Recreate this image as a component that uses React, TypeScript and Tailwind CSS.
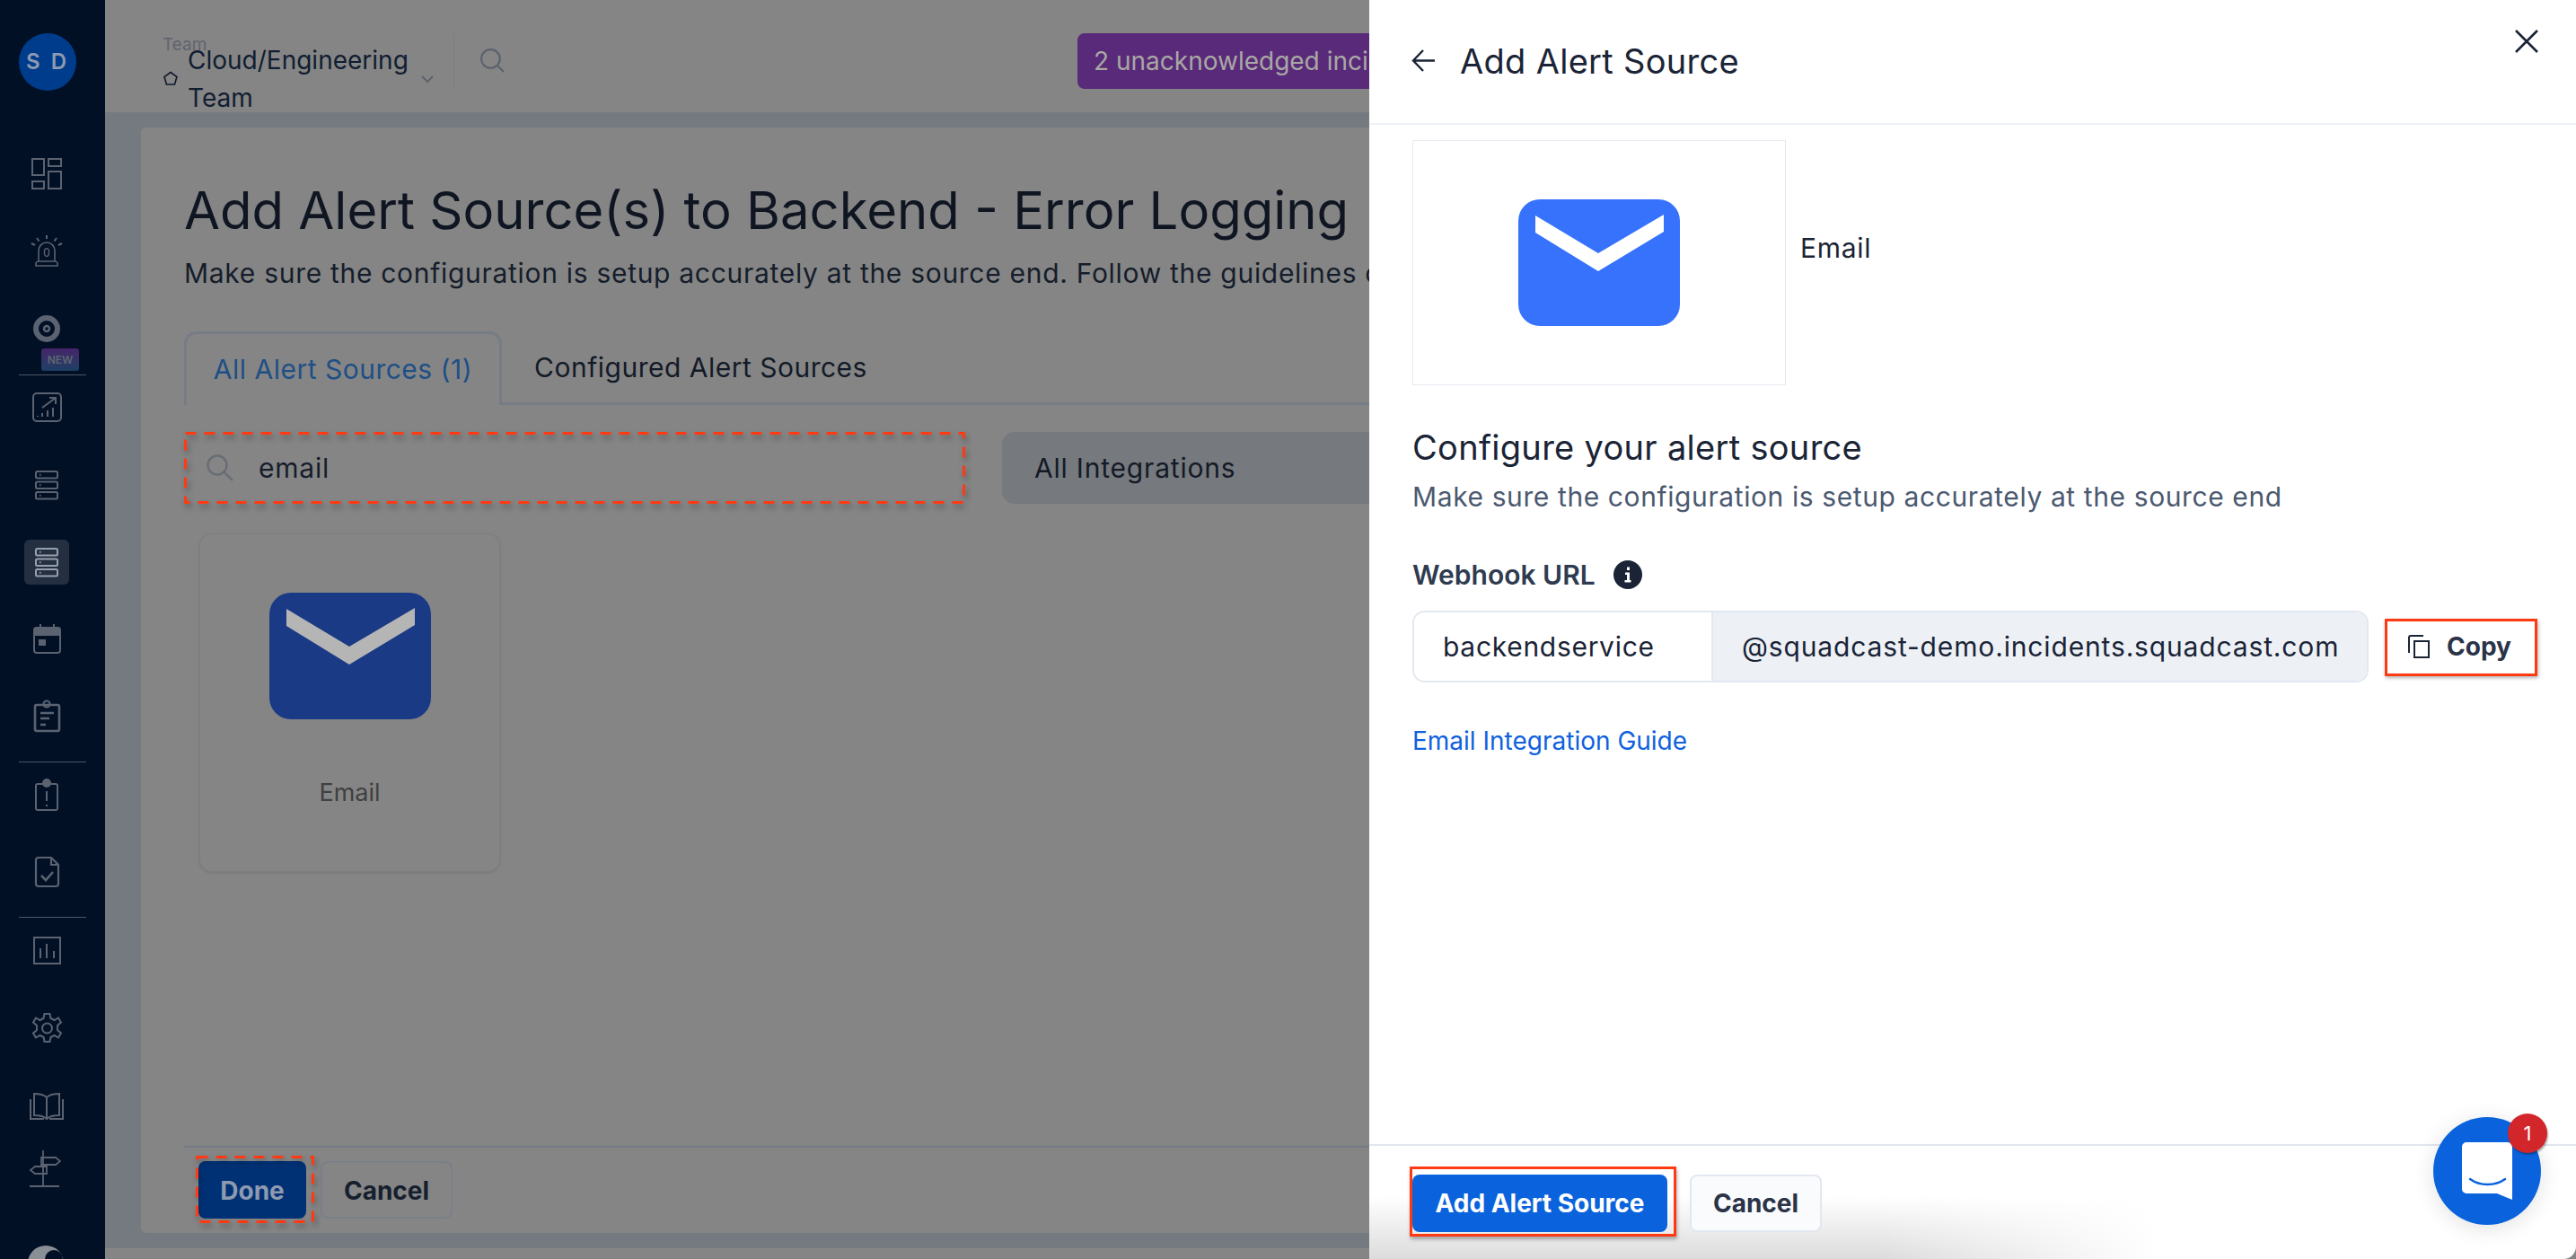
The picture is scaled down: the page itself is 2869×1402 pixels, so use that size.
const iconColor = '#5b6270';

function NavIcon({ children, active }: { children: React.ReactNode; active?: boolean }) {
  return (
    <div className="relative h-[72px] flex items-center justify-center pr-[13px]">
      {active && <div className="absolute left-[27px] top-[11px] w-[50px] h-[50px] rounded-[6px] bg-[#242f41]" />}
      <svg
        viewBox="0 0 40 40"
        fill="none"
        stroke={active ? '#98a0ac' : iconColor}
        strokeWidth="2"
        className="relative w-[40px] h-[40px]"
      >
        {children}
      </svg>
    </div>
  );
}

function NewTag({ className }: { className: string }) {
  return (
    <div className={`absolute left-[46px] w-[42px] h-[25px] rounded-[3px] bg-gradient-to-b from-[#44246a] to-[#183f63] flex items-center justify-center text-[12px] font-semibold text-[#5d6672] ${className}`}>
      NEW
    </div>
  );
}

function ServerRows() {
  return (
    <>
      <rect x="8" y="5" width="24" height="7.5" rx="1.5" />
      <rect x="8" y="16.5" width="24" height="7.5" rx="1.5" />
      <rect x="8" y="28" width="24" height="7.5" rx="1.5" />
      <path d="M12 8.7h1.5M12 20.2h1.5M12 31.7h1.5" />
    </>
  );
}

function EmailIcon({ bg, mark }: { bg: string; mark: string }) {
  return (
    <svg viewBox="0 0 180 141" className="w-[180px] h-[141px]">
      <rect width="180" height="141" rx="24" fill={bg} />
      <path d="M19 18L89 60L162 17V36L89 80L19 37Z" fill={mark} />
    </svg>
  );
}

function Dashed({ className }: { className: string }) {
  return (
    <svg className={`absolute drop-shadow-[2px_4px_3px_rgba(0,0,0,0.35)] ${className}`} fill="none">
      <rect x="1.5" y="1.5" width="calc(100% - 3px)" height="calc(100% - 3px)" stroke="#ff3a12" strokeWidth="3" strokeDasharray="12 9" />
    </svg>
  );
}

function Sidebar() {
  return (
    <aside className="relative w-[117px] shrink-0 bg-[#021026] flex flex-col">
      <div className="ml-[21px] mt-[37px] w-[64px] h-[64px] rounded-full bg-[#003c8c] flex items-center justify-center text-[24px] font-semibold tracking-[3px] text-[#8d9ab0]">
        S D
      </div>

      <div className="mt-[57px] flex flex-col gap-[14px]">
        <NavIcon>
          <rect x="4" y="3" width="13" height="18" />
          <rect x="22" y="3" width="14" height="8" />
          <rect x="22" y="17" width="14" height="19" />
          <rect x="4" y="28" width="13" height="8" />
        </NavIcon>
        <NavIcon>
          <path d="M8 36v-3a3 3 0 0 1 3-2h18a3 3 0 0 1 3 2v3z" strokeWidth="1.6" />
          <path d="M11 31V19a9 9 0 0 1 18 0v12" strokeWidth="1.6" />
          <ellipse cx="20" cy="21" rx="2.6" ry="4.4" strokeWidth="1.4" />
          <path d="M20 2v4M9 5l2.5 3.5M31 5l-2.5 3.5M3 11l4 2M37 11l-4 2" strokeWidth="2" />
        </NavIcon>
        <NavIcon>
          <circle cx="20" cy="20" r="12" stroke={iconColor} strokeWidth="6" />
          <circle cx="20" cy="20" r="3" strokeWidth="2.5" />
        </NavIcon>
      </div>
      <NewTag className="top-[388px]" />

      <div className="mt-[15px] mx-[21px] h-px bg-[#4b5463]" />
      <div className="flex flex-col gap-[14px]">
        <NavIcon>
          <rect x="5" y="4" width="31" height="31" rx="4" />
          <path d="M15 20L30 9M23 9h7v7" />
          <path d="M10 30v-1M15 30v-4M21 30v-7M27 30v-10" />
        </NavIcon>
        <NavIcon>
          <ServerRows />
        </NavIcon>
        <NavIcon active>
          <ServerRows />
        </NavIcon>
        <NavIcon>
          <rect x="6" y="7" width="29" height="28" rx="3" />
          <path d="M6 9a3 3 0 0 1 3-2h23a3 3 0 0 1 3 2v6H6z" fill={iconColor} />
          <path d="M13 3v6M28 3v6" />
          <rect x="11" y="20" width="8" height="7" fill={iconColor} stroke="none" />
        </NavIcon>
        <NavIcon>
          <rect x="7" y="7" width="27" height="29" rx="2" strokeWidth="2.6" />
          <circle cx="20" cy="6" r="3.5" strokeWidth="2.2" />
          <path d="M13 16h15M13 22h10M13 29h6" strokeWidth="2.5" />
        </NavIcon>
      </div>

      <div className="mt-[14px] mx-[21px] h-px bg-[#4b5463]" />
      <div className="mt-px flex flex-col gap-[13px]">
        <NavIcon>
          <rect x="8" y="7" width="24" height="29" rx="2" />
          <circle cx="20" cy="6" r="4" fill={iconColor} />
          <path d="M20 15v11M20 30v2" />
        </NavIcon>
        <NavIcon>
          <path d="M8 7a3 3 0 0 1 3-3h14l8 8v21a3 3 0 0 1-3 3H11a3 3 0 0 1-3-3z" strokeWidth="2.2" />
          <path d="M25 4v8h8" strokeWidth="2.2" />
          <path d="M14 24l5 5 8-9" strokeWidth="2.6" />
        </NavIcon>
      </div>

      <div className="mt-[14px] mx-[21px] h-px bg-[#4b5463]" />
      <div className="mt-px flex flex-col gap-[14px]">
        <NavIcon>
          <rect x="6" y="5" width="29" height="29" />
          <path d="M13 28v-11M20 28V12M28 28v-8" />
        </NavIcon>
        <NavIcon>
          <path d="M17.5 4h6l1 5 4 2 4.500-2.500 3 5-4 3.500v5l4 3.500-3 5-4.500-2.500-4 2-1 5h-6l-1-5-4-2-4.500 2.500-3-5 4-3.500v-5l-4-3.500 3-5 4.500 2.500 4-2z" />
          <circle cx="20.500" cy="20" r="5.500" />
        </NavIcon>
        <NavIcon>
          <path d="M20 11c-3-3-8-4-14-4v24c6 0 11 1 14 4 3-3 8-4 14-4V7c-6 0-11 1-14 4zM20 11v24" />
          <path d="M2 13v22h15M38 13v22H23" />
        </NavIcon>
      </div>
      <svg viewBox="0 0 36 42" fill="none" stroke={iconColor} strokeWidth="1.8" className="ml-[32px] mt-[13px] w-[36px] h-[42px]">
        <path d="M16 1v40M1 41h33M14 9h16l5 4-5 4H14zM20 19H7l-5 4 5 4h13z" />
      </svg>
      <div className="absolute left-[31px] top-[1387px] w-[40px] h-[40px] rounded-full bg-[#8a8f96]" />
      <div className="absolute left-[50px] top-[1392px] w-[20px] h-[20px] rounded-full bg-[#021026]" />
    </aside>
  );
}

function Header() {
  return (
    <header className="relative h-[125px] shrink-0 bg-[#858585] flex items-center pl-[64px]">
      <div className="absolute left-[64px] top-[38px] text-[19px] leading-[24px] text-[#5f646c]">Team</div>
      <svg viewBox="0 0 18 18" fill="none" stroke="#0f1a2e" strokeWidth="1.6" className="w-[18px] h-[18px] mt-[51px]">
        <path d="M9 1.500l7 5-2.500 8.500h-9L2 6.500z" />
      </svg>
      <div className="ml-[10px] w-[262px] text-[28px] leading-[42px] text-[#111d31] mt-[50px]">Cloud/Engineering Team</div>
      <svg viewBox="0 0 14 9" fill="none" stroke="#5d636c" strokeWidth="2" className="w-[14px] h-[9px] mt-[51px] -ml-[2px]">
        <path d="M1 1l6 6 6-6" />
      </svg>
      <div className="ml-[22px] w-px h-[60px] bg-[#7b7f85] mt-[11px]" />
      <svg viewBox="0 0 26 26" fill="none" stroke="#5d636c" strokeWidth="2.2" className="ml-[29px] w-[27px] h-[27px] mt-[9px]">
        <circle cx="11" cy="11" r="10" />
        <path d="M18 18l7 7" />
      </svg>
      <div className="ml-[638px] h-[62px] w-[700px] rounded-[8px] bg-[#5a2a7a] flex items-center pl-[18px] text-[28px] text-[#a8a8a4] whitespace-nowrap mt-[11px]">
        2 unacknowledged incidents on this team
      </div>
    </header>
  );
}

function PageBehind() {
  return (
    <main className="flex-1 min-w-0 flex flex-col">
      <Header />
      <div className="h-[1265px] bg-[#757a80] pl-[40px] pt-[17px] pb-[17px]">
        <div className="h-full bg-[#858585] rounded-tl-[6px] rounded-bl-[6px] pl-[48px] pb-[16px] flex flex-col">
          <h1 className="mt-[57px] text-[58px] leading-[70px] text-[#0f1622] whitespace-nowrap">
            Add Alert Source(s) to Backend - Error Logging
          </h1>
          <p className="mt-[15px] text-[30px] tracking-[0.7px] leading-[40px] text-[#151d2b] whitespace-nowrap">
            Make sure the configuration is setup accurately at the source end. Follow the guidelines on the right.
          </p>

          <div className="mt-[45px] h-[82px] flex border-b-[3px] border-[#767c86] text-[30px] tracking-[0.5px]">
            <div className="w-[354px] h-[82px] border-[3px] border-b-0 border-[#767c86] rounded-t-[14px] bg-[#858585] flex items-center justify-center text-[#1e4f85]">
              All Alert Sources (1)
            </div>
            <div className="ml-[36px] pt-[2px] flex items-center text-[#131a27]">Configured Alert Sources</div>
          </div>

          <div className="mt-[30px] flex text-[30px] tracking-[0.8px]">
            <div className="w-[869px] h-[80px] rounded-[6px] flex items-center pl-[25px]">
              <svg viewBox="0 0 30 30" fill="none" stroke="#686d75" strokeWidth="2.4" className="w-[30px] h-[30px]">
                <circle cx="12" cy="12" r="10.500" />
                <path d="M20 20l9 9" />
              </svg>
              <span className="ml-[28px] text-[#151d2b]">email</span>
            </div>
            <div className="ml-[42px] w-[600px] h-[80px] rounded-[14px] bg-[#76797d] flex items-center pl-[36px] text-[#131a27]">
              All Integrations
            </div>
          </div>

          <div className="mt-[33px] ml-[17px] w-[335px] h-[377px] rounded-[14px] border border-[#7c7e80] shadow-[0_1px_3px_rgba(0,0,0,0.12)] flex flex-col items-center pt-[65px]">
            <EmailIcon bg="#1b3a85" mark="#b5b5b5" />
            <span className="mt-[64px] text-[27px] leading-[36px] text-[#3f4042]">Email</span>
          </div>

          <div className="mt-auto h-[81px] border-t-[2px] border-[#737a84] pt-[15px] flex gap-[16px] text-[28px] font-bold">
            <button className="ml-[16px] w-[120px] h-[64px] pt-[2px] rounded-[8px] bg-[#003175] text-[#8e9ab0]">Done</button>
            <button className="w-[147px] h-[64px] pt-[2px] rounded-[8px] border-[2px] border-[#7b7f87] text-[#161f2e]">Cancel</button>
          </div>
        </div>
      </div>
      <div className="h-[12px] bg-[#858585]" />
    </main>
  );
}

function Drawer() {
  return (
    <section className="absolute left-[1525px] top-0 w-[1344px] h-[1402px] bg-white rounded-br-[14px] overflow-hidden flex flex-col text-[#1a2436]">
      <div className="h-[139px] shrink-0 border-b-[2px] border-[#eef1f5] flex items-center pl-[47px]">
        <svg viewBox="0 0 27 27" fill="none" stroke="#1a2436" strokeWidth="2.400" className="w-[27px] h-[27px] -mt-[2px]">
          <path d="M26 13.500H2M13 2L2 13.500 13 25" />
        </svg>
        <span className="ml-[27px] text-[38px] tracking-[0.3px] leading-[46px] -mt-[2px] whitespace-nowrap">Add Alert Source</span>
      </div>
      <svg viewBox="0 0 26 26" fill="none" stroke="#1a2436" strokeWidth="2.600" className="absolute right-[42px] top-[33px] w-[26px] h-[26px]">
        <path d="M1 1l24 24M25 1L1 25" />
      </svg>

      <div className="flex-1 min-h-0 pl-[48px] pt-[17px]">
        <div className="flex items-start">
          <div className="w-[416px] h-[273px] border border-[#e5e9f0] flex items-center justify-center">
            <EmailIcon bg="#3672fb" mark="#ffffff" />
          </div>
          <span className="ml-[16px] mt-[100px] text-[30px] tracking-[0.7px] leading-[40px]">Email</span>
        </div>
        <h2 className="mt-[46px] text-[38px] tracking-[0.3px] leading-[46px] whitespace-nowrap">Configure your alert source</h2>
        <p className="mt-[12px] text-[30px] tracking-[0.6px] leading-[40px] text-[#4b5970] whitespace-nowrap">
          Make sure the configuration is setup accurately at the source end
        </p>
        <div className="mt-[47px] h-[40px] flex items-center">
          <span className="text-[30px] font-semibold text-[#2f3b50] whitespace-nowrap">Webhook URL</span>
          <svg viewBox="0 0 32 32" className="ml-[20px] w-[32px] h-[32px]">
            <circle cx="16" cy="16" r="16" fill="#1a2436" />
            <path d="M13 13.500h5V22h1.500v2.500h-7V22H15v-6h-2zM15 7.500h3V11h-3z" fill="#fff" />
          </svg>
        </div>
        <div className="mt-[20px] flex items-center">
          <div className="w-[1065px] h-[80px] flex rounded-[14px] border-[2px] border-[#e2e8f0] overflow-hidden text-[30px] tracking-[0.7px]">
            <div className="w-[333px] h-full bg-white border-r-[2px] border-[#e2e8f0] pl-[32px] flex items-center">backendservice</div>
            <div className="flex-1 h-full bg-[#edf1f6] pl-[32px] flex items-center whitespace-nowrap tracking-[0.85px]">@squadcast-demo.incidents.squadcast.com</div>
          </div>
          <button className="ml-[17px] w-[170px] h-[64px] flex items-center pl-[27px]">
            <svg viewBox="0 0 24 26" fill="none" stroke="#1a2436" strokeWidth="2" className="w-[24px] h-[26px]">
              <rect x="7" y="7" width="16" height="18" />
              <path d="M1 20V3a2 2 0 0 1 2-2h14" />
            </svg>
            <span className="ml-[19px] text-[28px] font-bold text-[#2a3347]">Copy</span>
          </button>
        </div>
        <div className="mt-[47px] text-[28px] leading-[36px] text-[#0f61dd]">Email Integration Guide</div>
      </div>

      <div className="absolute left-0 bottom-0 w-[880px] h-[70px] bg-gradient-to-t from-[#dcdcdc] to-transparent [mask-image:linear-gradient(to_right,black_65%,transparent)]" />
      <div className="relative h-[128px] shrink-0 border-t-[2px] border-[#e2e7f0] pt-[32px] pl-[48px] flex gap-[25px] text-[28px] font-bold">
        <button className="w-[284px] h-[64px] rounded-[8px] bg-[#0a63dc] text-white">Add Alert Source</button>
        <button className="w-[147px] h-[64px] rounded-[8px] border-[2px] border-[#e2e7f0] bg-[#fafbfc] text-[#2a3347]">Cancel</button>
      </div>
    </section>
  );
}

export default function App() {
  return (
    <div className="relative w-[2869px] h-[1402px] overflow-hidden bg-black flex font-['Inter',sans-serif]">
      <Sidebar />
      <PageBehind />
      <Drawer />

      {/* markup drawn on top of the screenshot */}
      <Dashed className="left-[205px] top-[481px] w-[870px] h-[80px]" />
      <Dashed className="left-[218px] top-[1287px] w-[132px] h-[75px]" />
      <div className="absolute left-[2656px] top-[689px] w-[170px] h-[64px] border-[3px] border-[#ff3a12] shadow-[1px_2px_4px_rgba(0,0,0,0.3)]" />
      <div className="absolute left-[1570px] top-[1299px] w-[297px] h-[78px] border-[3px] border-[#ff3a12] shadow-[1px_3px_4px_rgba(0,0,0,0.3)]" />

      {/* chat launcher */}
      <div className="absolute left-[2710px] top-[1244px] w-[120px] h-[120px] rounded-full bg-[#0a63dc] shadow-[0_4px_24px_rgba(0,0,0,0.12)] flex items-center justify-center">
        <svg viewBox="0 0 56 64" className="w-[56px] h-[64px]">
          <path d="M5 0h46a5 5 0 0 1 5 5v59L39 57H5a5 5 0 0 1-5-5V5a5 5 0 0 1 5-5z" fill="#fff" />
          <path d="M9 41c11 8 28 8 39 0" fill="none" stroke="#0a63dc" strokeWidth="2.600" strokeLinecap="round" />
        </svg>
      </div>
      <div className="absolute left-[2793px] top-[1240px] w-[44px] h-[44px] rounded-full bg-[#d3262b] shadow-[1px_2px_2px_rgba(0,0,0,0.3)] flex items-center justify-center text-[22px] text-white">
        1
      </div>
    </div>
  );
}
